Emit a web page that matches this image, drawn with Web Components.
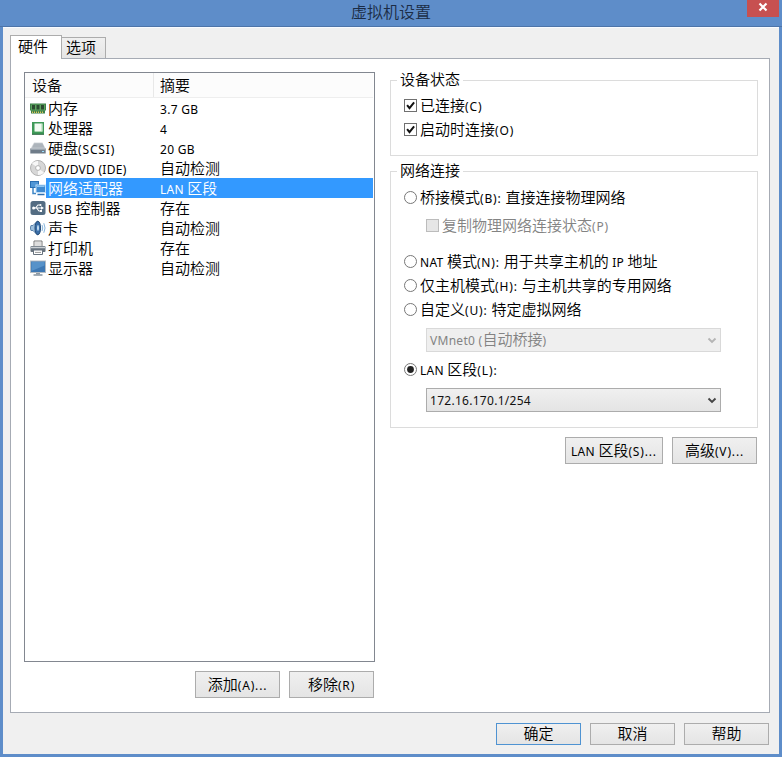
<!DOCTYPE html>
<html lang="zh-CN">
<head>
<meta charset="utf-8">
<title>虚拟机设置</title>
<style>
html,body{margin:0;padding:0}
body{width:782px;height:757px;overflow:hidden;font-family:"Noto Sans","Noto Sans CJK SC",sans-serif;font-size:15px;color:#000}
</style>
</head>
<body>
<settings-window></settings-window>
<script>
const define = (name, html, setup) => {
  const t = document.createElement('template');
  t.innerHTML = html;
  customElements.define(name, class extends HTMLElement {
    constructor() {
      super();
      this.attachShadow({mode: 'open'}).append(t.content.cloneNode(true));
    }
    connectedCallback() { if (setup) setup(this, this.shadowRoot); }
  });
};

// Mixed-script label: Latin runs are set smaller than the Chinese runs.
define('ui-text', `<style>
:host{display:inline-block;white-space:pre;line-height:var(--lh,18px);height:20px;font-family:"Noto Sans CJK SC",sans-serif;font-weight:350}
span{font-family:"Noto Sans","Noto Sans CJK SC",sans-serif;font-size:12px;font-weight:400;letter-spacing:.28px}
span.key{letter-spacing:.85px}
</style><div></div>`, (el, root) => {
  const box = root.querySelector('div');
  box.textContent = '';
  for (const run of el.getAttribute('text').match(/[\u0000-\u00ff]+|[^\u0000-\u00ff]+/g)) {
    if (run.charCodeAt(0) < 256) {
      const s = document.createElement('span');
      if (/^\(\w+\)/.test(run)) s.className = 'key';
      s.textContent = run;
      box.append(s);
    } else box.append(run);
  }
});

define('ui-button', `<style>
:host{--lh:17px;display:flex;box-sizing:border-box;height:27px;width:85px;align-items:center;justify-content:center;border:1px solid #acacac;background:linear-gradient(#f0f0f0,#e4e4e4)}
:host([short]){--lh:18px;height:22px}
:host([primary]){border-color:#4f93d2}
</style><slot></slot>`);

define('ui-check', `<style>
:host{display:flex;height:24px;align-items:center;gap:2px}
svg{width:14px;height:14px;flex:none}
:host([disabled]){color:#838383}
:host([disabled]) rect{fill:#e6e6e6;stroke:#bcbcbc}
path{display:none}
:host([checked]) path{display:block}
</style><svg viewBox="0 0 14 14"><rect x=".5" y=".5" width="12" height="12" fill="#fff" stroke="#707070"/><path d="M3.1 6.200 5.500 9.200 10.100 3.400" fill="none" stroke="#111" stroke-width="2"/></svg><slot></slot>`);

define('ui-radio', `<style>
:host{display:flex;height:24px;align-items:center;gap:2px}
svg{width:14px;height:14px;flex:none}
.dot{display:none}
:host([checked]) .dot{display:block}
</style><svg viewBox="0 0 14 14"><circle cx="6.500" cy="6.500" r="6" fill="#fff" stroke="#777"/><circle class="dot" cx="6.500" cy="6.500" r="3.400" fill="#222"/></svg><slot></slot>`);

define('ui-combo', `<style>
:host{display:flex;box-sizing:border-box;width:295px;height:24px;align-items:center;justify-content:space-between;padding:0 3px 0 3px;border:1px solid #acacac;background:linear-gradient(#f0f0f0,#e4e4e4);color:#111}
:host([disabled]){border-color:#d9d9d9;background:#efefef;color:#838383}
svg{width:10px;height:8px}
path{fill:none;stroke:#444;stroke-width:1.9}
:host([disabled]) path{stroke:#b5b5b5}
</style><slot></slot><svg viewBox="0 0 10 8"><path d="M1.500 2.500 5 6 8.500 2.500"/></svg>`);

define('ui-group', `<style>
:host{display:block;box-sizing:border-box;border:1px solid #dcdcdc}
.t{--lh:18px;display:flex;width:max-content;margin:-11px 0 0 6px;padding:0 3px;height:20px;background:#fff}
</style><div class="t"></div><slot></slot>`, (el, root) => {
  const label = document.createElement('ui-text');
  label.setAttribute('text', el.getAttribute('title-text'));
  root.querySelector('.t').replaceChildren(label);
});

const icons = {
  mem: `<path d="M0 3.500h16v7h-1v3H1v-3H0z" fill="#3c8048"/><path d="M1 4.500h14v6H1z" fill="#5da35e"/><path d="M2 5h3v4.500H2zM6.500 5h3v4.500h-3zM11 5h3v4.500h-3z" fill="#2c4a31"/><path d="M2 12.300h12" stroke="#e0c95c" stroke-width="1.600" stroke-dasharray="1 1"/>`,
  cpu: `<rect x="2" y="2" width="12" height="12" fill="#3f9a58"/><path d="M2 14.300h12" stroke="#24613a"/><rect x="4.500" y="3.500" width="8" height="8" fill="#f2fbf2"/><path d="M5 11.500h7V4" fill="none" stroke="#a9d5af"/>`,
  disk: `<path d="M4 2.500h8.500L15.800 9H.3z" fill="#d3d7db"/><path d="M4.300 3.200h8l2.300 4.600H2z" fill="#adb4bb"/><path d="M.3 8.500h15.400v5H.3z" fill="#6f7c89"/><path d="M1 9h14" stroke="#c8ced4"/><path d="M12 11.500h2" stroke="#9be0ff"/>`,
  cd: `<circle cx="8" cy="8" r="7.500" fill="#d7d7d7" stroke="#b2b2b2"/><path d="M8 8 2 3.600A7 7 0 0 1 8 1zM8 8l6 4.400A7 7 0 0 1 8 15z" fill="#f7f7f7"/><circle cx="8" cy="8" r="2.400" fill="#fff" stroke="#b2b2b2"/>`,
  net: `<rect x=".5" y="1.500" width="8" height="6" fill="#4f96d6" stroke="#2a6fb2"/><path d="M3 8v5.500h3" fill="none" stroke="#3f86c6" stroke-width="1.500"/><rect x="6" y="5" width="9.500" height="7.500" fill="#3f8ad0" stroke="#bfe0fa"/><path d="M7 6.500h7.500" stroke="#8cc6f4"/><path d="M7.500 14.500h7" stroke="#2d6fb0" stroke-width="1.500"/>`,
  usb: `<rect x=".5" y="1" width="15" height="14" rx="2.500" fill="#536c82"/><path d="M3 8h9M5.500 8l2.500-3h2M6.500 8l2.500 3h2" fill="none" stroke="#fff" stroke-width="1.100"/><circle cx="3.600" cy="8" r="1.500" fill="#fff"/><path d="M11 6.200 14 8l-3 1.800z" fill="#fff"/><circle cx="10.500" cy="5" r="1" fill="#fff"/><path d="M10 10h2v2h-2z" fill="#fff"/>`,
  snd: `<path d="M1 5.500h2L7.500 1v14L3 10.500H1Q-.3 8 1 5.500z" fill="#9fc0dd" stroke="#5b83ab"/><ellipse cx="7.800" cy="8" rx="2.800" ry="6.800" fill="#3a6ea8" stroke="#254c77"/><ellipse cx="8" cy="8" rx="1" ry="3" fill="#c6e0f3"/><path d="M12 5q1.500 3 0 6M13.800 3.200q2.500 4.800 0 9.600" fill="none" stroke="#86b4dc"/>`,
  prn: `<path d="M4 1h8v6H4z" fill="#fff" stroke="#777"/><path d="M5 3h6M5 5h6" stroke="#bbb"/><rect x=".5" y="6" width="15" height="6" rx="1" fill="#68737e"/><path d="M1 7.500h14" stroke="#cbd0d5" stroke-width="1.500"/><path d="M3.500 10h9v4.500h-9z" fill="#fff" stroke="#68737e"/><path d="M5 12.400h6" stroke="#999"/>`,
  mon: `<rect x=".5" y="1" width="15" height="11.500" fill="#3d78b4" stroke="#b4bcc3"/><path d="M1.500 2h13v3.500L1.500 11z" fill="#5692c9"/><path d="M6 13h4v1.500H6z" fill="#8d9aa5"/><path d="M3.500 15h9" stroke="#8d9aa5" stroke-width="1.600"/>`
};

define('device-row', `<style>
:host{--lh:19px;display:grid;grid-template-columns:16px 107px 1fr;height:20px;padding-left:5px;margin-right:1px}
svg{width:16px;height:16px;margin-top:2px}
.n{padding-left:2px}
.s{padding-left:7px}
.n,.s{display:flex;height:20px}
:host([selected]) .n,:host([selected]) .s{background:#3399ff;color:#fff}
</style><svg viewBox="0 0 16 16"></svg><div class="n"><slot></slot></div><div class="s"><slot name="summary"></slot></div>`,
(el, root) => { root.querySelector('svg').innerHTML = icons[el.getAttribute('icon')]; });

define('device-list', `<style>
:host{display:block;box-sizing:border-box;width:351px;height:590px;border:1px solid #828790;background:#fff}
.h{--lh:19px;display:grid;grid-template-columns:128px 1fr;height:24px;border-bottom:1px solid #eee;background:#fcfcfc;margin-right:1px}
.h div{display:flex;padding:2px 0 0 7px}
.h div+div{border-left:1px solid #e8e8e8;padding-left:6px}
</style><div class="h"><div><ui-text text="设备"></ui-text></div><div><ui-text text="摘要"></ui-text></div></div><slot></slot>`);

define('title-bar', `<style>
:host{display:grid;grid-template-columns:1fr 32px;box-sizing:border-box;height:27px;background:#5e8dc9;color:#1b2c45;border-bottom:1px solid #4d74a8;padding-right:3px;font:350 16px/22px "Noto Sans CJK SC",sans-serif}
.t{text-align:center;padding-left:35px;height:24px}
.x{height:17px;background:#c75050;display:flex;align-items:center;justify-content:center}
svg{width:10px;height:10px;margin-top:-3px}
</style><div class="t"><slot></slot></div><div class="x"><svg viewBox="0 0 10 10"><path d="M1.500 1.500l7 7M8.500 1.500l-7 7" stroke="#fff" stroke-width="2.200"/></svg></div>`);

define('tab-strip', `<style>
:host{display:flex;align-items:flex-end;height:23px}
div{display:flex;box-sizing:border-box;border:1px solid #acacac;border-bottom:0}
.a{--lh:19px;width:52px;height:24px;background:#fff;padding:0 0 0 7px;margin-bottom:-1px;z-index:1}
.b{--lh:18px;width:44px;height:21px;background:linear-gradient(#f0f0f0,#e5e5e5);border-left:0;padding:0 0 0 4px}
</style><div class="a"><ui-text text="硬件"></ui-text></div><div class="b"><ui-text text="选项"></ui-text></div>`);

define('settings-window', `<style>
:host{display:block;box-sizing:border-box;width:782px;height:757px;background:#5e8dc9}
.body{box-sizing:border-box;margin:0 3px;height:727px;background:#f0f0f0;padding:7px 9px 0 7px;border-top:1px solid #f8fbff}
.panel{box-sizing:border-box;width:760px;height:655px;border:1px solid #a6abb4;background:#fff;display:flex;gap:15px;padding:13px 0 0 13px}
.acts{display:flex;justify-content:flex-end;gap:9px;padding-right:1px}
.left{display:flex;flex-direction:column;gap:9px;width:351px}
.right{width:368px;padding-top:8px}
.st{height:76px}
.nw{height:257px;margin:15px 0 9px}
.in{padding-left:13px}
.sub{margin-left:22px}
.foot{padding-top:10px}
ui-text{flex:none}
</style>
<title-bar>虚拟机设置</title-bar>
<div class="body">
<tab-strip></tab-strip>
<div class="panel">
<div class="left">
<device-list>
<device-row icon="mem"><ui-text text="内存"></ui-text><ui-text slot="summary" text="3.7 GB"></ui-text></device-row>
<device-row icon="cpu"><ui-text text="处理器"></ui-text><ui-text slot="summary" text="4"></ui-text></device-row>
<device-row icon="disk"><ui-text text="硬盘(SCSI)"></ui-text><ui-text slot="summary" text="20 GB"></ui-text></device-row>
<device-row icon="cd"><ui-text text="CD/DVD (IDE)"></ui-text><ui-text slot="summary" text="自动检测"></ui-text></device-row>
<device-row icon="net" selected><ui-text text="网络适配器"></ui-text><ui-text slot="summary" text="LAN 区段"></ui-text></device-row>
<device-row icon="usb"><ui-text text="USB 控制器"></ui-text><ui-text slot="summary" text="存在"></ui-text></device-row>
<device-row icon="snd"><ui-text text="声卡"></ui-text><ui-text slot="summary" text="自动检测"></ui-text></device-row>
<device-row icon="prn"><ui-text text="打印机"></ui-text><ui-text slot="summary" text="存在"></ui-text></device-row>
<device-row icon="mon"><ui-text text="显示器"></ui-text><ui-text slot="summary" text="自动检测"></ui-text></device-row>
</device-list>
<div class="acts"><ui-button><ui-text text="添加(A)..."></ui-text></ui-button><ui-button><ui-text text="移除(R)"></ui-text></ui-button></div>
</div>
<div class="right">
<ui-group class="st" title-text="设备状态"><div class="in" style="padding-top:4px">
<ui-check checked><ui-text text="已连接(C)"></ui-text></ui-check>
<ui-check checked><ui-text text="启动时连接(O)"></ui-text></ui-check>
</div></ui-group>
<ui-group class="nw" title-text="网络连接"><div class="in" style="padding-top:5px">
<ui-radio><ui-text text="桥接模式(B): 直接连接物理网络"></ui-text></ui-radio>
<ui-check disabled class="sub" style="margin-top:4px"><ui-text text="复制物理网络连接状态(P)"></ui-text></ui-check>
<ui-radio style="margin-top:12px"><ui-text text="NAT 模式(N): 用于共享主机的 IP 地址"></ui-text></ui-radio>
<ui-radio><ui-text text="仅主机模式(H): 与主机共享的专用网络"></ui-text></ui-radio>
<ui-radio><ui-text text="自定义(U): 特定虚拟网络"></ui-text></ui-radio>
<ui-combo disabled class="sub" style="margin-top:6px"><ui-text text="VMnet0 (自动桥接)"></ui-text></ui-combo>
<ui-radio checked style="margin-top:6px"><ui-text text="LAN 区段(L):"></ui-text></ui-radio>
<ui-combo class="sub" style="margin-top:6px"><ui-text text="172.16.170.1/254"></ui-text></ui-combo>
</div></ui-group>
<div class="acts"><ui-button style="width:98px"><ui-text text="LAN 区段(S)..."></ui-text></ui-button><ui-button><ui-text text="高级(V)..."></ui-text></ui-button></div>
</div>
</div>
<div class="acts foot"><ui-button short primary><ui-text text="确定"></ui-text></ui-button><ui-button short><ui-text text="取消"></ui-text></ui-button><ui-button short><ui-text text="帮助"></ui-text></ui-button></div>
</div>`);
</script>
</body>
</html>
